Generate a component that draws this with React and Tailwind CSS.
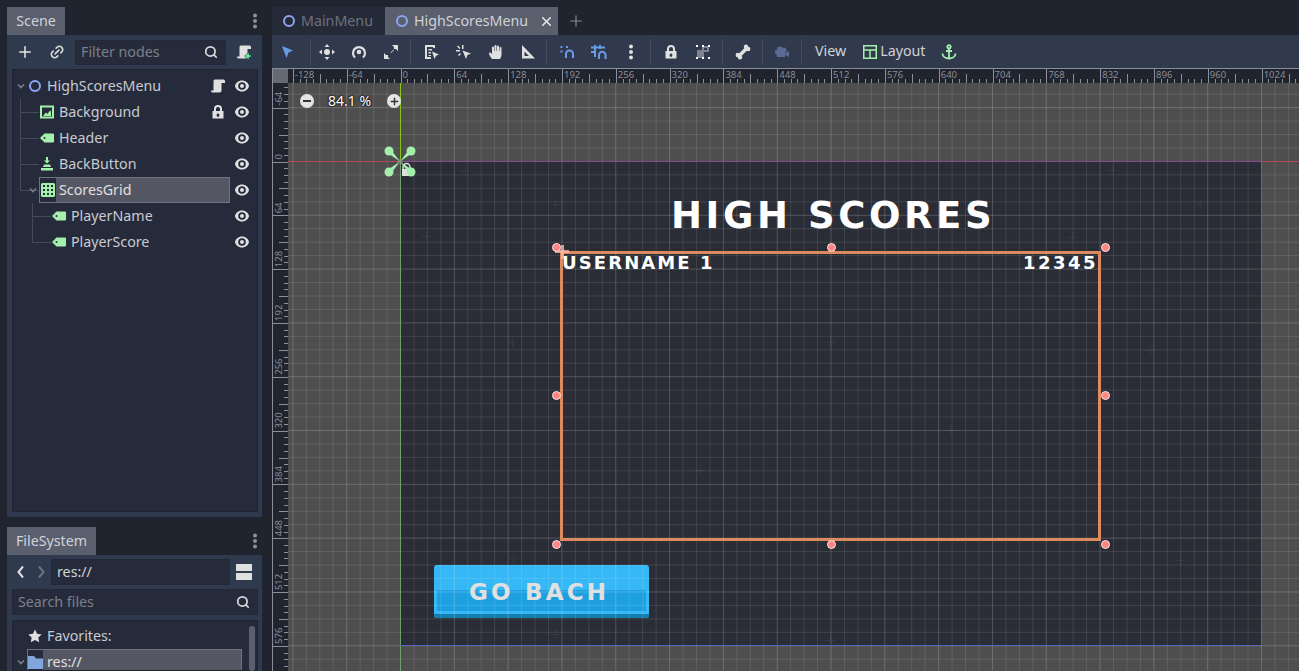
import { Plus, Search, Link2, X } from 'lucide-react';

const GREEN = '#a5efac';

// small godot style icons, all drawn on a 16 unit box
const Ring = () => (
    <svg width="16" height="16" viewBox="0 0 16 16" className="shrink-0">
        <circle cx="8" cy="8" r="5" fill="none" stroke="#8da5f3" strokeWidth="2" />
    </svg>
);

const Eye = () => (
    <svg width="16" height="16" viewBox="0 0 16 16" className="shrink-0" fill="#e0e0e0">
        <path fillRule="evenodd" d="M8 2.500C4.200 2.500 1.400 5.200 1 8c.4 2.800 3.200 5.500 7 5.500s6.600-2.700 7-5.500c-.4-2.800-3.200-5.500-7-5.500zM8 4.200a3.800 3.800 0 1 1 0 7.600 3.800 3.800 0 0 1 0-7.600z" />
        <circle cx="8" cy="8" r="2" />
    </svg>
);

const Scroll = ({ add }) => (
    <svg width="16" height="16" viewBox="0 0 16 16" className="shrink-0" fill="#e0e0e0">
        <path d="M5 1.500h8.500c1 0 1.500.8 1.500 2v1.500h-3.500v7.500c0 1.200-.8 2-2 2H2.500c-1 0-1.500-.8-1.500-2h2.500v-9c0-1.200.5-2 1.500-2z" />
        {add && <path fill="#5fff97" d="M11 9h2v2h2v2h-2v2h-2v-2H9v-2h2z" stroke="#2f3a4e" strokeWidth="0.5" />}
    </svg>
);

const LockIcon = ({ color = '#e0e0e0' }) => (
    <svg width="16" height="16" viewBox="0 0 16 16" className="shrink-0" fill={color}>
        <path fillRule="evenodd" d="M8 1a4 4 0 0 0-4 4v2H2.500v7.500h11V7H12V5a4 4 0 0 0-4-4zm0 2a2 2 0 0 1 2 2v2H6V5a2 2 0 0 1 2-2zm0 6.500a1.500 1.500 0 0 1 .7 2.800V13H7.300v-.7A1.500 1.500 0 0 1 8 9.500z" />
    </svg>
);

const ImageIcon = () => (
    <svg width="16" height="16" viewBox="0 0 16 16" className="shrink-0" fill={GREEN}>
        <path fillRule="evenodd" d="M1 1.500h14v13H1zM3 3.500v9h10v-9z" />
        <path d="M4 12l3-3.500 1.500 1.500L11 6.500l1 1V12z" />
    </svg>
);

const Tag = () => (
    <svg width="16" height="16" viewBox="0 0 16 16" className="shrink-0" fill={GREEN}>
        <path fillRule="evenodd" d="M5.500 3.500H14a1 1 0 0 1 1 1v7a1 1 0 0 1-1 1H5.500L1 8zM5.500 7a1 1 0 1 0 0 2 1 1 0 0 0 0-2z" />
    </svg>
);

const TexButton = () => (
    <svg width="16" height="16" viewBox="0 0 16 16" className="shrink-0" fill={GREEN}>
        <path d="M7 1h2v3.500h2L8 7.500 5 4.500h2zM5 8.500h6l1 2.500H4zM2 12h12v2.500H2z" />
    </svg>
);

const GridIcon = () => (
    <svg width="16" height="16" viewBox="0 0 16 16" className="shrink-0" fill={GREEN}>
        <path fillRule="evenodd" d="M2.500 1h11A1.500 1.500 0 0 1 15 2.500v11a1.500 1.500 0 0 1-1.500 1.500h-11A1.500 1.500 0 0 1 1 13.500v-11A1.500 1.500 0 0 1 2.500 1zM3 3v2h2V3zm4 0v2h2V3zm4 0v2h2V3zM3 7v2h2V7zm4 0v2h2V7zm4 0v2h2V7zM3 11v2h2v-2zm4 0v2h2v-2zm4 0v2h2v-2z" />
    </svg>
);

const Chevron = ({ className }) => (
    <svg width="10" height="10" viewBox="0 0 10 10" className={className} fill="none" stroke="#7b7f8a" strokeWidth="1.600">
        <path d="M2 3.500l3 3 3-3" />
    </svg>
);

const Dots = ({ color = '#8d9099' }) => (
    <svg width="6" height="16" viewBox="0 0 6 16" fill={color} className="shrink-0">
        <circle cx="3" cy="2.500" r="2" />
        <circle cx="3" cy="8" r="2" />
        <circle cx="3" cy="13.500" r="2" />
    </svg>
);

const Sep = () => <div className="w-px h-[26px] bg-[#454c5f] shrink-0" />;

// toolbar button, fixed width so the icons fall on the same 32px beat
const Tool = ({ children, w = 'w-8' }) => (
    <div className={`${w} h-full flex items-center justify-center shrink-0`}>{children}</div>
);

const treeRows = [
    { label: 'HighScoresMenu', depth: 0, icon: <Ring />, right: <Scroll /> },
    { label: 'Background', depth: 1, icon: <ImageIcon />, right: <LockIcon /> },
    { label: 'Header', depth: 1, icon: <Tag /> },
    { label: 'BackButton', depth: 1, icon: <TexButton /> },
    { label: 'ScoresGrid', depth: 1, icon: <GridIcon />, selected: true },
    { label: 'PlayerName', depth: 2, icon: <Tag /> },
    { label: 'PlayerScore', depth: 2, icon: <Tag /> },
];

function TreeRow({ row }) {
    const indent = row.depth === 0 ? 'pl-[15px]' : row.depth === 1 ? 'pl-[27px]' : 'pl-[39px]';
    return (
        <div className={`relative h-[26px] flex items-stretch ${indent}`}>
            <div className={`flex-1 min-w-0 flex items-center ${row.selected ? 'bg-[#545763] outline outline-1 -outline-offset-1 outline-[#6f7380]' : ''}`}>
                <div className={`h-full flex items-center ${row.selected ? 'bg-[#262b3b] border-l border-y border-[#6f7380] -mr-px' : ''}`}>{row.icon}</div>
                <span className={`ml-1 text-[14.25px] leading-none ${row.selected ? 'text-[#e0e0e0]' : 'text-[#c8cad0]'}`}>{row.label}</span>
                <div className="ml-auto pr-1 flex items-center">{row.right}</div>
            </div>
            <div className="w-6 mr-1 flex items-center justify-center"><Eye /></div>
        </div>
    );
}

const SCALE = 0.841;
const ORIGIN_X = 112.5;
const ORIGIN_Y = 78.5;
const rulerSteps = Array.from({ length: 26 * 8 }, (_, i) => i - 3 * 8);

function TopRuler() {
    return (
        <svg width="1011" height="14" className="block shrink-0">
            {rulerSteps.map(i => {
                const x = Math.round(ORIGIN_X + i * 8 * SCALE) + 0.5;
                const h = i % 8 === 0 ? 14 : i % 4 === 0 ? 9 : 4;
                return <line key={i} x1={x} x2={x} y1={14 - h} y2={14} stroke="#8d9098" strokeWidth="1" />;
            })}
            {rulerSteps.filter(i => i % 8 === 0 && i * 8 >= -128 && i * 8 <= 1024).map(i => (
                <text key={i} x={ORIGIN_X + i * 8 * SCALE + 2} y="9" fontSize="9.500" fill="#8a8d95" fontFamily="Noto Sans">{i * 8}</text>
            ))}
        </svg>
    );
}

function LeftRuler() {
    return (
        <svg width="15" height="588" className="block shrink-0">
            {rulerSteps.map(i => {
                const y = Math.round(ORIGIN_Y + i * 8 * SCALE) + 0.5;
                const w = i % 8 === 0 ? 15 : i % 4 === 0 ? 9 : 4;
                return <line key={i} x1={15 - w} x2={15} y1={y} y2={y} stroke="#8d9098" strokeWidth="1" />;
            })}
            {rulerSteps.filter(i => i % 8 === 0 && i * 8 >= -64 && i * 8 <= 576).map(i => {
                const y = ORIGIN_Y + i * 8 * SCALE - 2;
                return <text key={i} x="9" y={y} fontSize="9.500" fill="#8a8d95" fontFamily="Noto Sans" transform={`rotate(-90 9 ${y})`}>{i * 8}</text>;
            })}
        </svg>
    );
}

const handles = [[556, 247], [831, 247], [1105, 247], [556, 395], [1105, 395], [556, 544], [831, 544], [1105, 544]];
// faint stars of the background texture, in page coordinates
const stars = [[555, 204], [426, 236], [465, 171], [1200, 204], [1072, 237], [1112, 170], [513, 558], [555, 634], [830, 342], [512, 342], [1150, 350], [700, 470], [950, 430], [1180, 560], [830, 640]];

// the 2d viewport is a free canvas, everything in it sits at a canvas coordinate
function Viewport() {
    return (
        <div className="relative flex-1 overflow-hidden bg-[#4e4e4e]">
            {/* game area */}
            <div className="absolute left-[112px] top-[79px] w-[861px] h-[483px] bg-[#2a2d36]" />
            <svg width="1011" height="588" className="absolute left-0 top-0" stroke="#343844" strokeWidth="1">
                {stars.map(([x, y]) => (
                    <path key={`${x}-${y}`} d={`M${x - 288 - 5} ${y - 83 + 0.5}h10M${x - 288 + 0.5} ${y - 83 - 5}v10`} />
                ))}
            </svg>

            {/* go back button */}
            <div className="absolute left-[146px] top-[482px] w-[215px] h-[53px] rounded-[3px] overflow-hidden flex flex-col bg-[#35b8f5]">
                <div className="h-[25px]" />
                <div className="h-[21px] bg-[#1ea0e0] mx-[3px]" />
                <div className="h-[3px]" />
                <div className="flex-1 bg-[#127fb0]" />
            </div>

            {/* grid */}
            <div className="absolute inset-0 bg-[linear-gradient(to_right,rgba(255,255,255,0.1)_1px,transparent_1px),linear-gradient(to_bottom,rgba(255,255,255,0.1)_1px,transparent_1px)] bg-size-[13.455px_13.455px] bg-position-[4.4px_10.7px]" />
            <div className="absolute inset-0 bg-[linear-gradient(to_right,rgba(255,255,255,0.09)_1px,transparent_1px),linear-gradient(to_bottom,rgba(255,255,255,0.09)_1px,transparent_1px)] bg-size-[53.82px_53.82px] bg-position-[4.4px_24.2px]" />

            {/* axes and bounds */}
            <div className="absolute left-0 top-[78px] w-[112px] h-px bg-[#b04a5a]" />
            <div className="absolute left-[112px] top-[78px] w-[861px] h-px bg-[#8a4a9a]" />
            <div className="absolute left-[973px] top-[78px] right-0 h-px bg-[#b04a5a]" />
            <div className="absolute left-[112px] top-0 w-px h-[78px] bg-[#86c410]" />
            <div className="absolute left-[112px] top-[78px] w-px bottom-0 bg-[#6f9f6a]" />
            <div className="absolute left-[973px] top-[79px] w-px h-[483px] bg-[#5566b8]" />
            <div className="absolute left-[112px] top-[562px] w-[861px] h-px bg-[#5566b8]" />

            {/* zoom widget */}
            <div className="absolute left-[12px] top-[11px] w-[101px] h-[14px] flex items-center">
                <div className="w-[14px] h-[14px] rounded-full bg-[#e4e4e4] flex items-center justify-center">
                    <div className="w-2 h-0.5 bg-[#333]" />
                </div>
                <span className="ml-[14px] text-[14px] leading-none text-white [text-shadow:0_0_2px_#000,0_0_2px_#000]">84.1 %</span>
                <div className="ml-auto w-[14px] h-[14px] rounded-full bg-[#e4e4e4] flex items-center justify-center">
                    <Plus size={11} strokeWidth={3} color="#333" />
                </div>
            </div>

            {/* anchors */}
            <svg width="34" height="36" viewBox="0 0 34 36" className="absolute left-[95px] top-[62px]">
                <path d="M20 24v-2a3.500 3.500 0 0 1 7 0v3" fill="none" stroke="#e0e0e0" strokeWidth="1.500" />
                <path d="M19 31v-7h8v7z" fill="#e0e0e0" />
                <g fill={GREEN}>
                    <path d="M17 16.500L7.700 4.200 4.300 7.800zM17 16.500L26.300 4.200 29.700 7.800zM17 16.500L7.700 28.800 4.300 25.200zM17 16.500L26.300 28.800 29.700 25.200z" />
                    <circle cx="6" cy="6" r="4.500" />
                    <circle cx="28" cy="6" r="4.500" />
                    <circle cx="6" cy="27" r="4.500" />
                    <circle cx="28" cy="27" r="4.500" />
                </g>
                <path d="M14 16.500h6M17 13.500v6" stroke="#8a8d8a" strokeWidth="1" />
            </svg>

            {/* game text */}
            <div className="absolute left-[383px] top-[113px] text-[37px] leading-[40px] font-bold text-white whitespace-nowrap tracking-[3.6px] font-['DejaVu_Sans',sans-serif]">HIGH SCORES</div>
            <div className="absolute left-[274px] top-[171px] text-[18px] leading-[18px] font-bold text-white whitespace-nowrap tracking-[2.1px] font-['DejaVu_Sans',sans-serif]">USERNAME 1</div>
            <div className="absolute left-[735px] top-[171px] text-[18px] leading-[18px] font-bold text-white whitespace-nowrap tracking-[2.500px] font-['DejaVu_Sans',sans-serif]">12345</div>
            <div className="absolute left-[181px] top-[497px] text-[23px] leading-[24px] font-bold text-[#e0e0e0] whitespace-nowrap tracking-[3.2px] font-['DejaVu_Sans',sans-serif]">GO BACH</div>

            {/* selection */}
            <div className="absolute left-[272px] top-[168px] w-[541px] h-[290px] border-[3px] border-[#dd8a60]" />
            <div className="absolute left-[267px] top-[167px] w-[14px] h-[3px] bg-[#ffb5a5]/80" />
            <div className="absolute left-[273px] top-[162px] w-[3px] h-[14px] bg-[#ffb5a5]/80" />
            {handles.map(([x, y]) => (
                <div key={`${x}-${y}`} className="absolute w-[9px] h-[9px] rounded-full bg-[#ff8484] border border-[#f5e6e6]" style={{ left: x - 288 - 4, top: y - 83 - 4 }} />
            ))}
        </div>
    );
}

export default function App() {
    return (
        <div className="w-[1299px] h-[671px] overflow-hidden flex bg-[#20242f] text-[#c8cad0] font-['Noto_Sans',sans-serif]">
            {/* left docks */}
            <div className="w-[272px] shrink-0 pl-[7px] pr-[10px] pt-[7px] flex flex-col">
                <div className="h-7 shrink-0 flex items-stretch justify-between">
                    <div className="w-[58px] bg-[#5a5f6e] flex items-center justify-center text-[14.25px] text-[#d0d2d6]">Scene</div>
                    <div className="flex items-center mr-[4px]"><Dots /></div>
                </div>
                <div className="h-[482px] shrink-0 bg-[#303a4e] pl-[5px] pr-[4px] pt-1 pb-[5px] flex flex-col">
                    <div className="h-[26px] flex items-center shrink-0">
                        <div className="w-[26px] flex justify-center"><Plus size={18} strokeWidth={2} color="#e6e6e6" /></div>
                        <div className="w-[37px] flex justify-center"><Link2 size={16} strokeWidth={2.500} color="#d8d8d8" className="-rotate-45" /></div>
                        <div className="w-[151px] h-[25px] bg-[#262b3b] border border-[#232838] flex items-center justify-between pl-[5px] pr-[7px]">
                            <span className="text-[14.25px] leading-none text-[#7c808b]">Filter nodes</span>
                            <Search size={14} strokeWidth={3} color="#d8d8d8" />
                        </div>
                        <div className="ml-[10px]"><Scroll add /></div>
                    </div>
                    <div className="relative flex-1 mt-1 bg-[#262b3b] outline outline-1 -outline-offset-1 outline-[#20242f] pt-1">
                        {/* connector lines */}
                        <svg width="60" height="180" className="absolute left-0 top-0" fill="none" stroke="#454a59">
                            <path d="M8.500 30V121.500H27M8.500 43.500H27M8.500 69.500H27M8.500 95.500H27" />
                            <path d="M20.500 134V173.500H39M20.500 147.500H39" />
                        </svg>
                        <Chevron className="absolute left-[4px] top-[12px]" />
                        <Chevron className="absolute left-[16px] top-[116px]" />
                        {treeRows.map(row => <TreeRow key={row.label} row={row} />)}
                    </div>
                </div>

                <div className="h-7 shrink-0 mt-[10px] flex items-stretch justify-between">
                    <div className="w-[89px] bg-[#5a5f6e] flex items-center justify-center text-[14.25px] text-[#d0d2d6]">FileSystem</div>
                    <div className="flex items-center mr-[4px]"><Dots /></div>
                </div>
                <div className="flex-1 min-h-0 bg-[#303a4e] pl-[5px] pr-[4px] pt-1 flex flex-col">
                    <div className="h-[26px] shrink-0 flex items-center">
                        <svg width="39" height="14" viewBox="0 0 39 14" className="shrink-0" fill="none" strokeWidth="2">
                            <path d="M11 1.500L6.500 7l4.500 5.500" stroke="#e0e0e0" />
                            <path d="M27 1.500L31.500 7 27 12.500" stroke="#6e7380" />
                        </svg>
                        <div className="w-[179px] h-[26px] bg-[#262b3b] border border-[#232838] flex items-center pl-[5px] text-[14.25px] text-[#d0d2d6]">res://</div>
                        <div className="ml-[6px] w-4 flex flex-col gap-[2px]">
                            <div className="h-[7px] bg-[#e0e0e0]" />
                            <div className="h-[7px] bg-[#e0e0e0]" />
                        </div>
                    </div>
                    <div className="h-[26px] shrink-0 mt-1 bg-[#262b3b] border border-[#232838] flex items-center justify-between pl-[5px] pr-[7px]">
                        <span className="text-[14.25px] leading-none text-[#7c808b]">Search files</span>
                        <Search size={14} strokeWidth={3} color="#d8d8d8" />
                    </div>
                    <div className="relative flex-1 min-h-0 mt-[5px] bg-[#262b3b] outline outline-1 -outline-offset-1 outline-[#20242f] overflow-hidden">
                        <div className="h-[29px] pt-[3px] flex items-center pl-[15px]">
                            <svg width="16" height="16" viewBox="0 0 16 16" fill="#e0e0e0" className="shrink-0">
                                <path d="M8 1.500l2 4.300 4.700.6-3.400 3.200.9 4.700L8 12l-4.200 2.300.9-4.700L1.300 6.400 6 5.800z" />
                            </svg>
                            <span className="ml-1 text-[14.25px] leading-none">Favorites:</span>
                        </div>
                        <div className="ml-[15px] mr-[16px] h-[26px] bg-[#545763] outline outline-1 -outline-offset-1 outline-[#6f7380] flex items-center">
                            <div className="h-full w-4 bg-[#262b3b] border-l border-y border-[#6f7380] flex items-center">
                                <svg width="15" height="13" viewBox="0 0 15 13" fill="#81a6dc" className="shrink-0">
                                    <path d="M0 0h6l2 2.500h7V13H0z" />
                                </svg>
                            </div>
                            <span className="ml-1 text-[14.25px] leading-none text-[#e0e0e0]">res://</span>
                        </div>
                        <Chevron className="absolute left-[4px] top-[37px]" />
                        <div className="absolute right-[3px] top-[6px] bottom-0 w-[6px] rounded-full bg-[#5b5f6c]" />
                    </div>
                </div>
            </div>

            {/* main area */}
            <div className="flex-1 min-w-0 pt-[7px] flex flex-col">
                <div className="h-7 flex items-stretch shrink-0">
                    <div className="w-[113px] bg-[#252a38] flex items-center pl-[9px] gap-1">
                        <Ring />
                        <span className="text-[14.25px] leading-none text-[#6d717c]">MainMenu</span>
                    </div>
                    <div className="w-[173px] bg-[#5a5f6e] flex items-center pl-[9px] gap-1">
                        <Ring />
                        <span className="text-[14.25px] leading-none text-[#d0d2d6]">HighScoresMenu</span>
                        <X size={15} strokeWidth={2.500} color="#e6e6e6" className="ml-[7px]" />
                    </div>
                    <div className="ml-[9px] flex items-center"><Plus size={18} strokeWidth={1.500} color="#8d9099" /></div>
                </div>

                <div className="h-[34px] bg-[#31394d] border-b border-[#8a8e98] flex items-center shrink-0">
                    <Tool w="w-[30px]">
                        <svg width="16" height="16" viewBox="0 0 16 16" fill="#699ce8"><path d="M3 2l11 4.500-4.500 2L7.500 14z" /></svg>
                    </Tool>
                    <div className="w-2" /><Sep />
                    <Tool>
                        <svg width="16" height="16" viewBox="0 0 16 16" fill="#e0e0e0"><path fillRule="evenodd" d="M8 0l2.500 3h-5zM8 16l-2.500-3h5zM0 8l3-2.500v5zM16 8l-3 2.500v-5zM8 5a3 3 0 1 1 0 6 3 3 0 0 1 0-6z" /></svg>
                    </Tool>
                    <Tool>
                        <svg width="16" height="16" viewBox="0 0 16 16" fill="none" stroke="#e0e0e0" strokeWidth="2.200"><path d="M4 13.500A6 6 0 1 1 12 13.500" /><circle cx="8" cy="8" r="1.200" fill="#e0e0e0" /></svg>
                    </Tool>
                    <Tool>
                        <svg width="16" height="16" viewBox="0 0 16 16" fill="#e0e0e0"><path d="M9 1h6v6zM1 15V9l6 6z" /><path d="M7.500 8.500l3-3 .5.500-3 3zM1 11h4v4H1zM11 1h4v4h-4z" /></svg>
                    </Tool>
                    <div className="w-[3px]" /><Sep />
                    <div className="w-[5px]" />
                    <Tool>
                        <svg width="16" height="16" viewBox="0 0 16 16" fill="#e0e0e0"><path d="M1 1h10v3H9V3H3v10h4v2H1zM4.500 5H8v1.500H4.500zM4.500 8H7v1.500H4.500zM4.500 11H7v1H4.500z" /><path d="M8 7.500l7 3-3 1.200L10.500 15z" /></svg>
                    </Tool>
                    <Tool>
                        <svg width="16" height="16" viewBox="0 0 16 16" fill="#e0e0e0"><path d="M0 6h4v1.500H0zM6 1h1.500v4H6zM2 1.500l2.500 2.500-1 1L1 2.500zM2 11l2-2 1 1-2 2zM6.500 6.500l8.500 3-3.500 1.500L10 15z" /></svg>
                    </Tool>
                    <Tool>
                        <svg width="16" height="16" viewBox="0 0 16 16" fill="#e0e0e0"><path d="M4 15c-1-1.500-3-4-3-5.500 0-1 1-1.200 2-.5l1 1V3.500a1 1 0 0 1 2 0V7h.5V2a1 1 0 0 1 2 0v5H9V2.500a1 1 0 0 1 2 0V7h.5V4a1 1 0 0 1 2 0v6c0 2-.5 3.500-1.500 5z" /></svg>
                    </Tool>
                    <Tool>
                        <svg width="16" height="16" viewBox="0 0 16 16" fill="#e0e0e0"><path fillRule="evenodd" d="M2 1l13 13.500H2zM4.500 7.500V12h4.500z" /></svg>
                    </Tool>
                    <div className="w-[2px]" /><Sep />
                    <div className="w-[4px]" />
                    <Tool>
                        <svg width="16" height="16" viewBox="0 0 16 16" fill="none" stroke="#699ce8" strokeWidth="2"><path d="M7 14V10a3.500 3.500 0 0 1 7 0v4" /><path d="M1.500 3h2M7 3h2M1.500 7.500h2" /></svg>
                    </Tool>
                    <Tool>
                        <svg width="16" height="16" viewBox="0 0 16 16" fill="none" stroke="#699ce8" strokeWidth="2"><path d="M8 15V11a3.200 3.200 0 0 1 6.500 0v4" /><path d="M4 1v12M9 1v4M0 3.500h14M0 8h5" /></svg>
                    </Tool>
                    <Tool><Dots color="#e0e0e0" /></Tool>
                    <div className="w-[3px]" /><Sep />
                    <div className="w-[4px]" />
                    <Tool><LockIcon /></Tool>
                    <Tool>
                        <svg width="16" height="16" viewBox="0 0 16 16"><path fill="#7f8391" d="M2 6h5V2h7v6H9v6H2z" /><path fill="#31394d" d="M9 4h3v2H9z" /><path fill="#fff" d="M1 1h2v2H1zM7 1h2v2H7zM13 1h2v2h-2zM1 13h2v2H1zM13 13h2v2h-2zM7 13h2v2H7z" /></svg>
                    </Tool>
                    <div className="w-[3px]" /><Sep />
                    <div className="w-[4px]" />
                    <Tool>
                        <svg width="16" height="16" viewBox="0 0 16 16" fill="#e0e0e0">
                            <path d="M4.500 11.500l7-7" stroke="#e0e0e0" strokeWidth="3.500" />
                            <circle cx="2.800" cy="11" r="2.200" /><circle cx="5" cy="13.200" r="2.200" />
                            <circle cx="11" cy="2.800" r="2.200" /><circle cx="13.200" cy="5" r="2.200" />
                        </svg>
                    </Tool>
                    <div className="w-[3px]" /><Sep />
                    <div className="w-[3px]" />
                    <Tool>
                        <svg width="16" height="16" viewBox="0 0 16 16" fill="#5a6a96"><circle cx="6" cy="5.500" r="3" /><circle cx="3.500" cy="8" r="2.500" /><path d="M2 7h9v6H3zM11 9l4-2v6l-4-2z" /><circle cx="10" cy="6" r="2.500" /></svg>
                    </Tool>
                    <div className="w-[3px]" /><Sep />
                    <span className="ml-[13px] text-[14.25px] leading-none text-[#d0d2d6]">View</span>
                    <div className="ml-[17px]">
                        <svg width="14" height="14" viewBox="0 0 14 14" fill="none" stroke={GREEN} strokeWidth="1.500" className="block"><path d="M.75.75h12.500v12.500H.75zM.75 5h12.500M7 5v8.250" /></svg>
                    </div>
                    <span className="ml-[3px] text-[14.25px] leading-none text-[#d0d2d6]">Layout</span>
                    <div className="ml-[15px]">
                        <svg width="16" height="16" viewBox="0 0 16 16" fill="none" stroke={GREEN} strokeWidth="1.800" className="block"><circle cx="8" cy="2.800" r="1.700" /><path d="M8 4.500V14.500M5 7h6M1.500 9.500c0 3 3 5 6.500 5s6.500-2 6.500-5" /></svg>
                    </div>
                </div>

                <div className="flex-1 min-h-0 flex flex-col border-l border-[#8a8e98]">
                    <div className="flex shrink-0">
                        <div className="w-[15px] h-[14px] bg-[#666a75] shrink-0" />
                        <div className="flex-1 bg-[#20242f] overflow-hidden"><TopRuler /></div>
                    </div>
                    <div className="flex-1 min-h-0 flex">
                        <div className="w-[15px] shrink-0 bg-[#20242f] overflow-hidden"><LeftRuler /></div>
                        <Viewport />
                    </div>
                </div>
            </div>
        </div>
    );
}
